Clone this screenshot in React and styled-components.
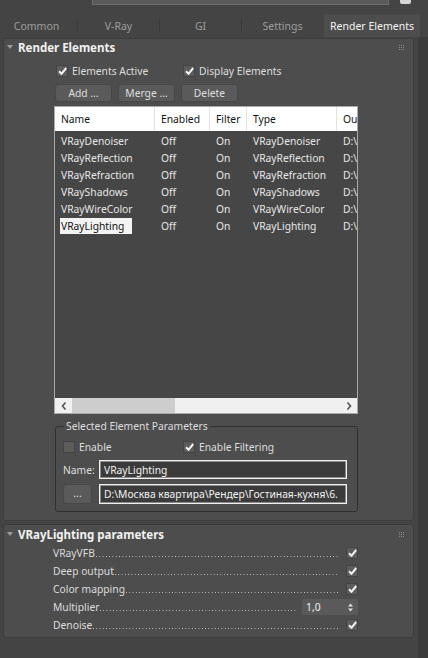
import React from "react";
import styled, { createGlobalStyle } from "styled-components";

const GlobalStyle = createGlobalStyle`
  html, body {
    margin: 0;
    padding: 0;
    background: #444444;
  }
  body {
    font-family: "Noto Sans", "Open Sans", sans-serif;
    font-size: 10.3px;
    color: #dcdcdc;
  }
  * {
    box-sizing: border-box;
  }
`;

const rows = [
  "VRayDenoiser",
  "VRayReflection",
  "VRayRefraction",
  "VRayShadows",
  "VRayWireColor",
  "VRayLighting",
];

const outPath = "D:\\Москва квартира\\Рендер\\Гостиная-кухня\\6.";

const CheckBox = ({ checked }) => (
  <Box>
    {checked && (
      <svg width="9" height="8" viewBox="0 0 9 8">
        <path
          d="M1 4.3 L3.5 6.8 L8.2 1"
          fill="none"
          stroke="#f4f4f4"
          strokeWidth="2"
        />
      </svg>
    )}
  </Box>
);

const Grip = () => (
  <GripWrap>
    <svg width="6" height="6" viewBox="0 0 6 6">
      {[0, 2, 4].map((y) =>
        [0, 2, 4].map((x) => (
          <rect key={`${x}-${y}`} x={x} y={y} width="1" height="1" fill="#8a8a8a" />
        ))
      )}
    </svg>
  </GripWrap>
);

const RolloutHeader = ({ title, height }) => (
  <Header $h={height}>
    <Arrow>
      <svg width="6" height="5" viewBox="0 0 6 5">
        <path d="M0 0 H6 L3 4 Z" fill="#9c9c9c" />
      </svg>
    </Arrow>
    <Title>{title}</Title>
    <Grip />
  </Header>
);

const ParamRow = ({ label, children, gap }) => (
  <Param>
    <ParamLabel>{label}</ParamLabel>
    <Dots />
    <ParamControl $gap={gap}>{children}</ParamControl>
  </Param>
);

export default function App() {
  return (
    <>
      <GlobalStyle />
      <Page>
        <TopStrip>
          <ComboBottom />
          <LockStub />
        </TopStrip>

        <Tabs>
          <Tab>Common</Tab>
          <TabSep />
          <Tab>V-Ray</Tab>
          <TabSep />
          <Tab>GI</Tab>
          <TabSep />
          <Tab>Settings</Tab>
          <TabSep $hidden />
          <Tab $active>Render Elements</Tab>
        </Tabs>

        <Body>
          <Column>
            <Panel>
              <RolloutHeader title="Render Elements" height={17} />
              <Content>
                <CheckRow>
                  <CheckItem>
                    <CheckBox checked />
                    Elements Active
                  </CheckItem>
                  <CheckItem>
                    <CheckBox checked />
                    Display Elements
                  </CheckItem>
                </CheckRow>

                <ButtonRow>
                  <Button>Add ...</Button>
                  <Button>Merge ...</Button>
                  <Button>Delete</Button>
                </ButtonRow>

                <Table>
                  <HeadRow>
                    <HeadCell>Name</HeadCell>
                    <HeadCell>Enabled</HeadCell>
                    <HeadCell>Filter</HeadCell>
                    <HeadCell>Type</HeadCell>
                    <HeadCell $last>Output</HeadCell>
                  </HeadRow>
                  <TableBody>
                    {rows.map((name, i) => (
                      <BodyRow key={name}>
                        <Cell>
                          {i === rows.length - 1 ? (
                            <Selected>{name}</Selected>
                          ) : (
                            name
                          )}
                        </Cell>
                        <Cell>Off</Cell>
                        <Cell>On</Cell>
                        <Cell>{name}</Cell>
                        <Cell>{outPath}</Cell>
                      </BodyRow>
                    ))}
                  </TableBody>
                  <HScroll>
                    <ScrollArrow>
                      <svg width="6" height="8" viewBox="0 0 6 8">
                        <path d="M4.5 0.5 L1.5 4 L4.5 7.5" fill="none" stroke="#555" strokeWidth="1.6" />
                      </svg>
                    </ScrollArrow>
                    <ScrollTrack>
                      <ScrollThumb />
                    </ScrollTrack>
                    <ScrollArrow>
                      <svg width="6" height="8" viewBox="0 0 6 8">
                        <path d="M1.5 0.5 L4.5 4 L1.5 7.5" fill="none" stroke="#555" strokeWidth="1.6" />
                      </svg>
                    </ScrollArrow>
                  </HScroll>
                </Table>

                <Group>
                  <Legend>Selected Element Parameters</Legend>
                  <GroupInner>
                    <EnableRow>
                      <CheckItem>
                        <CheckBox />
                        Enable
                      </CheckItem>
                      <CheckItem>
                        <CheckBox checked />
                        Enable Filtering
                      </CheckItem>
                    </EnableRow>
                    <FieldRow>
                      <FieldLabel>Name:</FieldLabel>
                      <Field $h={19}>VRayLighting</Field>
                    </FieldRow>
                    <FieldRow>
                      <SmallButton>...</SmallButton>
                      <Field $h={20}>{outPath}</Field>
                    </FieldRow>
                  </GroupInner>
                </Group>
              </Content>
            </Panel>

            <Panel2>
              <RolloutHeader title="VRayLighting parameters" height={19} />
              <Params>
                <ParamRow label="VRayVFB" gap={8}>
                  <CheckBox checked />
                </ParamRow>
                <ParamRow label="Deep output" gap={8}>
                  <CheckBox checked />
                </ParamRow>
                <ParamRow label="Color mapping" gap={8}>
                  <CheckBox checked />
                </ParamRow>
                <ParamRow label="Multiplier" gap={6}>
                  <Spinner>
                    <span>1,0</span>
                    <svg width="5" height="9" viewBox="0 0 5 9">
                      <path d="M0 3.5 L2.5 0.5 L5 3.5 Z M0 5.5 L2.5 8.5 L5 5.5 Z" fill="#e0e0e0" />
                    </svg>
                  </Spinner>
                </ParamRow>
                <ParamRow label="Denoise" gap={8}>
                  <CheckBox checked />
                </ParamRow>
              </Params>
            </Panel2>
          </Column>
          <SideTrack />
        </Body>
      </Page>
    </>
  );
}

const Page = styled.div`
  width: 428px;
  height: 658px;
  overflow: hidden;
  background: #444444;
  display: flex;
  flex-direction: column;
`;

const TopStrip = styled.div`
  height: 15px;
  display: flex;
  align-items: flex-start;
  padding-left: 92px;
`;

const ComboBottom = styled.div`
  width: 297px;
  height: 5px;
  background: #5a5a5a;
  border: 1px solid #6e6e6e;
  border-top: none;
`;

const LockStub = styled.div`
  width: 11px;
  height: 4px;
  margin-left: 11px;
  background: #d6d6d6;
  border-radius: 0 0 2px 2px;
`;

const Tabs = styled.div`
  height: 22px;
  display: flex;
  align-items: center;
  margin-left: -4px;
`;

const Tab = styled.div`
  height: 22px;
  width: ${(p) => (p.$active ? "96px" : "81px")};
  display: flex;
  align-items: center;
  justify-content: center;
  color: ${(p) => (p.$active ? "#f4f4f4" : "#9d9d9d")};
  background: ${(p) => (p.$active ? "#4d4d4d" : "transparent")};
  font-size: 10.5px;
`;

const TabSep = styled.div`
  width: 1px;
  height: 14px;
  background: ${(p) => (p.$hidden ? "transparent" : "#3a3a3a")};
`;

const Body = styled.div`
  flex: 1;
  display: flex;
`;

const Column = styled.div`
  width: 418px;
  padding: 1px 4px 0 3px;
  display: flex;
  flex-direction: column;
`;

const SideTrack = styled.div`
  width: 10px;
  background: #3b3b3b;
`;

const Panel = styled.div`
  width: 411px;
  background: #4d4d4d;
  border: 1px solid #3d3d3d;
  border-radius: 3px;
  padding-bottom: 8px;
`;

const Panel2 = styled(Panel)`
  margin-top: 3px;
  padding-bottom: 3px;
`;

const Header = styled.div`
  height: ${(p) => p.$h}px;
  display: flex;
  align-items: center;
  padding-left: 3px;
  padding-right: 8px;
`;

const Arrow = styled.span`
  display: flex;
  width: 11px;
`;

const Title = styled.span`
  flex: 1;
  font-weight: bold;
  font-size: 11.5px;
  color: #f2f2f2;
`;

const GripWrap = styled.span`
  display: flex;
`;

const Content = styled.div`
  padding-left: 50px;
`;

const CheckRow = styled.div`
  margin-top: 7px;
  height: 16px;
  display: grid;
  grid-template-columns: 127px auto;
  padding-left: 2px;
  align-items: center;
`;

const CheckItem = styled.label`
  display: flex;
  align-items: center;
  gap: 4px;
  color: #dedede;
  white-space: nowrap;
`;

const Box = styled.span`
  width: 12px;
  height: 12px;
  flex: none;
  background: #5c5c5c;
  border: 1px solid #434343;
  display: flex;
  align-items: center;
  justify-content: center;
`;

const ButtonRow = styled.div`
  margin-top: 5px;
  display: flex;
  gap: 6px;
  padding-left: 1px;
`;

const Button = styled.div`
  width: 57px;
  height: 18px;
  background: #5a5a5a;
  border: 1px solid #474747;
  border-radius: 3px;
  display: flex;
  align-items: center;
  justify-content: center;
  color: #dedede;
`;

const Table = styled.div`
  margin-top: 4px;
  width: 304px;
  height: 308px;
  border: 1px solid #a9a9a9;
  display: flex;
  flex-direction: column;
  background: #464646;
`;

const columns = "100px 55px 37px 90px 1fr";

const HeadRow = styled.div`
  height: 24px;
  display: grid;
  grid-template-columns: ${columns};
  background: #ffffff;
`;

const HeadCell = styled.div`
  display: flex;
  align-items: center;
  padding-left: 6px;
  color: #111;
  overflow: hidden;
  white-space: nowrap;
  border-right: ${(p) => (p.$last ? "none" : "1px solid #e2e2e2")};
`;

const TableBody = styled.div`
  flex: 1;
  padding-top: 1px;
`;

const BodyRow = styled.div`
  height: 17px;
  display: grid;
  grid-template-columns: ${columns};
`;

const Cell = styled.div`
  display: flex;
  align-items: center;
  padding-left: 6px;
  color: #e6e6e6;
  overflow: hidden;
  white-space: nowrap;
`;

const Selected = styled.span`
  margin-left: -1px;
  padding: 0 8px 0 1px;
  height: 16px;
  line-height: 16px;
  background: #f3f3f3;
  color: #111;
`;

const HScroll = styled.div`
  height: 15px;
  display: flex;
  align-items: center;
  background: #f0f0f0;
`;

const ScrollArrow = styled.div`
  width: 17px;
  height: 15px;
  display: flex;
  align-items: center;
  justify-content: center;
`;

const ScrollTrack = styled.div`
  flex: 1;
  height: 15px;
  display: flex;
  align-items: center;
`;

const ScrollThumb = styled.div`
  width: 103px;
  height: 15px;
  background: #cdcdcd;
`;

const Group = styled.fieldset`
  margin: 4px 0 0 1px;
  width: 303px;
  padding: 0 0 7px 7px;
  border: 1px solid #303030;
  border-radius: 3px;
`;

const Legend = styled.legend`
  padding: 0 2px;
  margin-left: 1px;
  line-height: 16px;
  color: #dedede;
`;

const GroupInner = styled.div`
  display: flex;
  flex-direction: column;
  gap: 5px;
  padding-top: 5px;
`;

const EnableRow = styled.div`
  height: 16px;
  display: grid;
  grid-template-columns: 120px auto;
  align-items: center;
`;

const FieldRow = styled.div`
  display: flex;
  align-items: center;
`;

const FieldLabel = styled.span`
  width: 36px;
  color: #dedede;
`;

const SmallButton = styled.div`
  width: 29px;
  height: 20px;
  margin-right: 7px;
  background: #5a5a5a;
  border: 1px solid #474747;
  border-radius: 3px;
  display: flex;
  align-items: center;
  justify-content: center;
  color: #dedede;
  padding-bottom: 3px;
`;

const Field = styled.div`
  width: 248px;
  height: ${(p) => p.$h}px;
  background: #3b3b3b;
  border: 1px solid #f0f0f0;
  box-shadow: inset 0 0 0 1px #8c8c8c;
  padding-left: 4px;
  display: flex;
  align-items: center;
  color: #f2f2f2;
  overflow: hidden;
  white-space: nowrap;
`;

const Params = styled.div`
  padding-left: 49px;
  width: 354px;
`;

const Param = styled.div`
  height: 18px;
  display: flex;
  align-items: center;
`;

const ParamLabel = styled.span`
  color: #dcdcdc;
  white-space: nowrap;
`;

const Dots = styled.span`
  flex: 1;
  align-self: flex-end;
  height: 1px;
  margin: 0 0 5px 1px;
  background-image: linear-gradient(to right, #cfcfcf 1px, transparent 1px);
  background-size: 3.3px 1px;
  background-repeat: repeat-x;
`;

const ParamControl = styled.div`
  margin-left: ${(p) => p.$gap}px;
  display: flex;
`;

const Spinner = styled.div`
  width: 56px;
  height: 16px;
  background: #5a5a5a;
  border-radius: 2px;
  display: flex;
  align-items: center;
  justify-content: space-between;
  padding: 0 5px 0 4px;
  color: #f0f0f0;
`;
